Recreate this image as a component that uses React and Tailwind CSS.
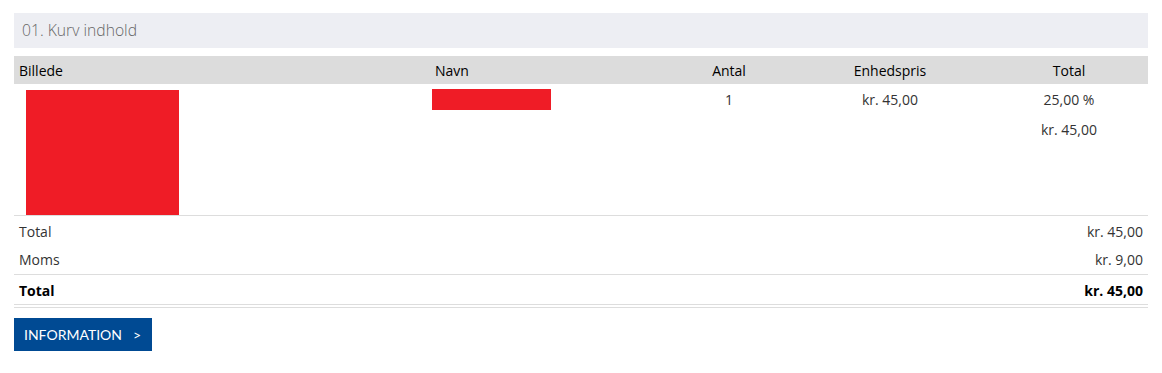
export default function App() {
  return (
    <div className="w-[1162px] h-[373px] bg-white pt-[13px] px-[14px] font-['Open_Sans',sans-serif] text-[14px]">
      {/* Section header */}
      <div className="h-[35px] bg-[#edeef3] flex items-center pl-[8px]">
        <span className="text-[15.7px] font-light text-[#666]">01. Kurv indhold</span>
      </div>

      {/* Cart table */}
      <table className="mt-[8px] w-full border-collapse table-fixed">
        <thead>
          <tr className="h-[28px] bg-[#dcdcdc] text-black">
            <th className="w-[416px] text-left font-normal pl-[5px]">Billede</th>
            <th className="w-[238px] text-left font-normal pl-[5px]">Navn</th>
            <th className="w-[122px] text-center font-normal">Antal</th>
            <th className="w-[200px] text-center font-normal">Enhedspris</th>
            <th className="w-[158px] text-center font-normal">Total</th>
          </tr>
        </thead>
        <tbody className="text-[#333]">
          <tr className="border-b border-[#dddddd] align-top">
            <td className="pl-[12px] pt-[6px]">
              <div className="w-[153px] h-[125px] bg-[#ef1c26]" />
            </td>
            <td className="pl-[2px] pt-[5px]">
              <div className="w-[119px] h-[21px] bg-[#ef1c26]" />
            </td>
            <td className="text-center pt-[6px] leading-[20px]">1</td>
            <td className="text-center pt-[6px] leading-[20px]">kr. 45,00</td>
            <td className="text-center pt-[6px] leading-[20px]">
              <div>25,00 %</div>
              <div className="mt-[10px]">kr. 45,00</div>
            </td>
          </tr>
        </tbody>
      </table>

      {/* Totals */}
      <div className="text-[#333]">
        <div className="h-[30px] flex items-center justify-between px-[5px]">
          <span>Total</span>
          <span>kr. 45,00</span>
        </div>
        <div className="h-[29px] flex items-center justify-between px-[5px] pb-[1px] border-b border-[#dddddd]">
          <span>Moms</span>
          <span>kr. 9,00</span>
        </div>
        <div className="h-[30px] flex items-center justify-between px-[5px] pt-[2px] font-bold text-black border-b border-[#dddddd]">
          <span>Total</span>
          <span>kr. 45,00</span>
        </div>
        <div className="mt-[2px] border-b border-[#dddddd]" />
      </div>

      <button className="mt-[10px] h-[33px] w-[138px] bg-[#004a93] text-white font-['Lato',sans-serif] text-[14px] flex items-center pl-[10px]">
        <span>INFORMATION</span>
        <span className="ml-[11px]">&gt;</span>
      </button>
    </div>
  )
}
